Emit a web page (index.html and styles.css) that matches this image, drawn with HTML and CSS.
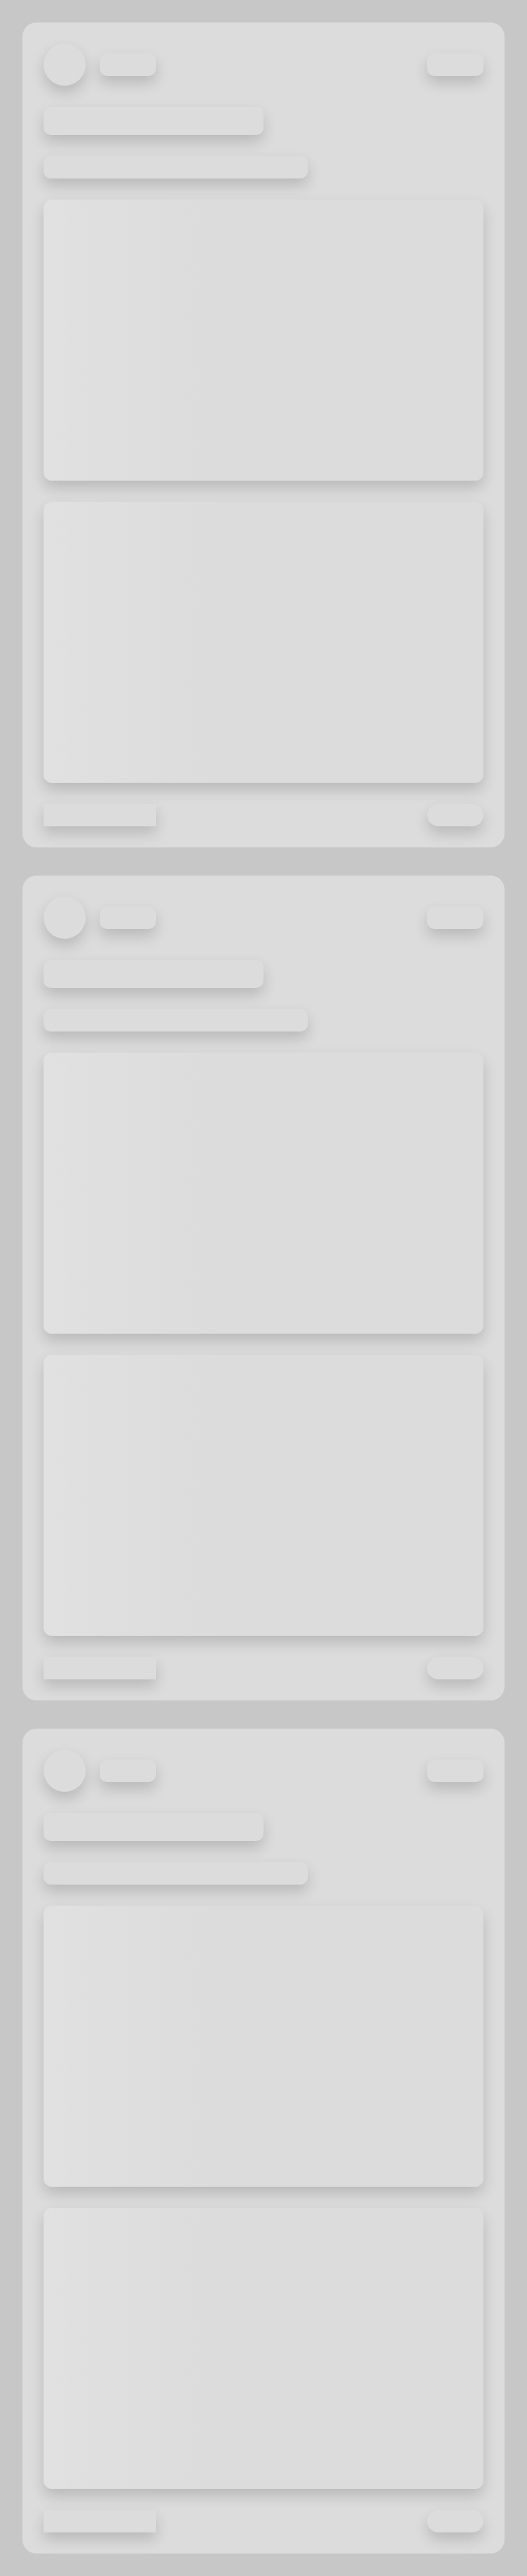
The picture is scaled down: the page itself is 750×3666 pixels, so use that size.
FILE: index.html
```html
<!DOCTYPE html>
<html>
<head>
<meta charset="utf-8">
<link rel="stylesheet" href="styles.css">
</head>
<body>
<main class="feed">
  <section class="card">
    <div class="head">
      <div class="avatar sk"></div>
      <div class="pill sk"></div>
      <div class="spacer"></div>
      <div class="pill sk"></div>
    </div>
    <div class="line line-a sk"></div>
    <div class="line line-b sk"></div>
    <div class="media sk shimmer"></div>
    <div class="media sk shimmer"></div>
    <div class="foot">
      <div class="block sk"></div>
      <div class="round sk"></div>
    </div>
  </section>
  <section class="card">
    <div class="head">
      <div class="avatar sk"></div>
      <div class="pill sk"></div>
      <div class="spacer"></div>
      <div class="pill sk"></div>
    </div>
    <div class="line line-a sk"></div>
    <div class="line line-b sk"></div>
    <div class="media sk shimmer"></div>
    <div class="media sk shimmer"></div>
    <div class="foot">
      <div class="block sk"></div>
      <div class="round sk"></div>
    </div>
  </section>
  <section class="card">
    <div class="head">
      <div class="avatar sk"></div>
      <div class="pill sk"></div>
      <div class="spacer"></div>
      <div class="pill sk"></div>
    </div>
    <div class="line line-a sk"></div>
    <div class="line line-b sk"></div>
    <div class="media sk shimmer"></div>
    <div class="media sk shimmer"></div>
    <div class="foot">
      <div class="block sk"></div>
      <div class="round sk"></div>
    </div>
  </section>
</main>
</body>
</html>
```
FILE: styles.css
```css
html, body {
  margin: 0;
  padding: 0;
  background: #c7c7c7;
  font-family: "Liberation Sans", Arial, sans-serif;
}
.feed {
  padding: 32px;
  display: flex;
  flex-direction: column;
  gap: 40px;
}
.card {
  background: #dcdcdc;
  border-radius: 20px;
  padding: 30px;
  display: flex;
  flex-direction: column;
  gap: 30px;
}
.sk {
  background: #dcdcdc;
  box-shadow: 0 10px 20px rgba(0, 0, 0, 0.16);
}
.head {
  display: flex;
  align-items: center;
  gap: 20px;
  height: 60px;
}
.spacer { flex: 1; }
.avatar {
  width: 60px;
  height: 60px;
  border-radius: 50%;
}
.pill {
  width: 80px;
  height: 32px;
  border-radius: 10px;
}
.line {
  border-radius: 10px;
}
.line-a { width: 50%; height: 40px; }
.line-b { width: 60%; height: 32px; }
.media {
  height: 400px;
  border-radius: 12px;
}
.shimmer {
  background: linear-gradient(90deg, #e1e1e1 0%, #dedede 20%, #dcdcdc 40%, #dcdcdc 100%);
}
.foot {
  display: flex;
  justify-content: space-between;
  align-items: center;
}
.block {
  width: 160px;
  height: 32px;
}
.round {
  width: 80px;
  height: 32px;
  border-radius: 16px;
}
```
